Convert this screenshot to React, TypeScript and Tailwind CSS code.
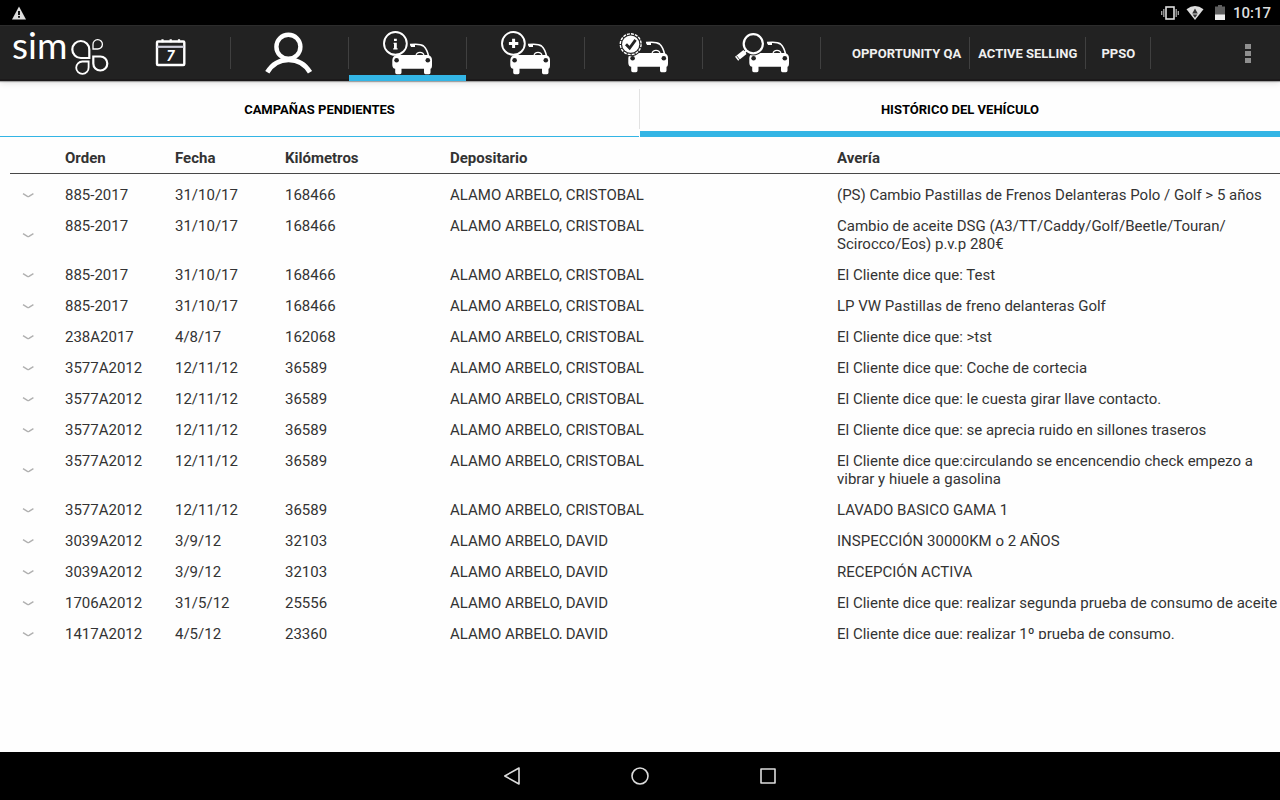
import { Fragment, useState } from "react";
import type { ReactNode } from "react";

type Row = [string, string, string, string, string];

const rows: Row[] = [
  ["885-2017", "31/10/17", "168466", "ALAMO ARBELO, CRISTOBAL", "(PS) Cambio Pastillas de Frenos Delanteras Polo / Golf > 5 años"],
  ["885-2017", "31/10/17", "168466", "ALAMO ARBELO, CRISTOBAL", "Cambio de aceite DSG (A3/TT/Caddy/Golf/Beetle/Touran/Scirocco/Eos) p.v.p 280€"],
  ["885-2017", "31/10/17", "168466", "ALAMO ARBELO, CRISTOBAL", "El Cliente dice que: Test"],
  ["885-2017", "31/10/17", "168466", "ALAMO ARBELO, CRISTOBAL", "LP VW Pastillas de freno delanteras Golf"],
  ["238A2017", "4/8/17", "162068", "ALAMO ARBELO, CRISTOBAL", "El Cliente dice que: >tst"],
  ["3577A2012", "12/11/12", "36589", "ALAMO ARBELO, CRISTOBAL", "El Cliente dice que: Coche de cortecia"],
  ["3577A2012", "12/11/12", "36589", "ALAMO ARBELO, CRISTOBAL", "El Cliente dice que: le cuesta girar llave contacto."],
  ["3577A2012", "12/11/12", "36589", "ALAMO ARBELO, CRISTOBAL", "El Cliente dice que: se aprecia ruido en sillones traseros"],
  ["3577A2012", "12/11/12", "36589", "ALAMO ARBELO, CRISTOBAL", "El Cliente dice que:circulando se encencendio check empezo a vibrar y hiuele a gasolina"],
  ["3577A2012", "12/11/12", "36589", "ALAMO ARBELO, CRISTOBAL", "LAVADO BASICO GAMA 1"],
  ["3039A2012", "3/9/12", "32103", "ALAMO ARBELO, DAVID", "INSPECCIÓN 30000KM o 2 AÑOS"],
  ["3039A2012", "3/9/12", "32103", "ALAMO ARBELO, DAVID", "RECEPCIÓN ACTIVA"],
  ["1706A2012", "31/5/12", "25556", "ALAMO ARBELO, DAVID", "El Cliente dice que: realizar segunda prueba de consumo de aceite"],
  ["1417A2012", "4/5/12", "23360", "ALAMO ARBELO, DAVID", "El Cliente dice que: realizar 1º prueba de consumo."],
];

function StatusBar() {
  return (
    <div className="flex h-[25px] shrink-0 items-center bg-black pr-[9px] pl-3 text-[#dedede]">
      <svg className="h-3.5 w-3.5" viewBox="0 0 14 14" aria-hidden="true">
        <path d="M7 0.5 14 13.5H0Z" fill="currentColor" />
        <path d="M6.1 5h1.8v4H6.1zM6.1 10h1.8v1.8H6.1z" fill="#000" />
      </svg>
      <div className="ml-auto flex items-center">
        <svg className="h-4 w-[18px]" viewBox="0 0 18 16" aria-hidden="true">
          <rect x="5" y="2" width="8" height="12" fill="none" stroke="currentColor" strokeWidth="1.6" />
          <path d="M2.8 4v8M15.2 4v8M0.7 6v4M17.3 6v4" stroke="#a8a8a8" strokeWidth="1.3" />
        </svg>
        <svg className="ml-[7px] h-4 w-[18px]" viewBox="0 0 18 16" aria-hidden="true">
          <path d="M0.5 4.3Q9-2.3 17.5 4.3L9 15Z" fill="currentColor" />
          <path d="M9 3.4 11.8 8.4H6.2ZM6.6 9.4h4.8L9 12.8Z" fill="#333" />
        </svg>
        <svg className="ml-[11px] h-4 w-2.5" viewBox="0 0 10 16" aria-hidden="true">
          <path d="M3 0h4v1.5h3V15H0V1.5h3z" fill="#5f5f5f" />
          <path d="M0 9.5h10V15H0z" fill="#f0f0f0" />
        </svg>
        <span className="ml-2 pt-0.5 text-[15px] leading-[23px] font-medium">10:17</span>
      </div>
    </div>
  );
}

function Logo() {
  return (
    <svg className="h-14 w-[113px] shrink-0 overflow-visible" viewBox="0 0 113 56" role="img" aria-label="sima">
      <text x="12" y="34" fill="#fff" fontFamily="Lato, sans-serif" fontSize="37">
        sim
      </text>
      <g fill="none" stroke="#fff" strokeWidth="2.2">
        <path d="M89.3 33H80.8A8.5 8.5 0 1 1 89.3 24.5Z" />
        <path d="M93 24V19.5A4.7 4.7 0 1 1 97.5 24Z" strokeWidth="1.3" />
        <path d="M93.3 31.5H100.3A7 7 0 1 1 93.3 38.5Z" />
        <path d="M88.6 36.5V42.5A6.2 6.2 0 1 1 82.4 36.5Z" strokeWidth="1.8" />
      </g>
    </svg>
  );
}

function Car({ x, y }: { x: number; y: number }) {
  return (
    <g transform={`translate(${x} ${y})`}>
      <path d="M18 1.6Q28 0.4 31.5 3Q35 6 36.5 13" fill="none" stroke="#fff" strokeWidth="1.6" />
      <path d="M18 1.5h5v2.4h-4z" fill="#fff" />
      <path d="M24 12.5Q24.5 9.4 28 9.4T32 12.5" fill="none" stroke="#fff" strokeWidth="1.2" />
      <path
        d="M5 12H36Q40 13 40 17V22Q40 25.5 38.5 25.7V29.5Q38.5 31.2 37 31.2H33.5Q32 31.2 32 29.5V25.7H9.5V29.5Q9.5 31.2 8 31.2H4.8Q3.2 31.2 3.2 29.5V25.7Q0.5 25.5 0.3 22V17Q0.8 12.6 5 12Z"
        fill="#fff"
      />
      <circle cx="4.6" cy="17.2" r="2.3" fill="#222" />
      <circle cx="35.8" cy="17.2" r="2.3" fill="#222" />
    </g>
  );
}

function CalendarIcon() {
  return (
    <>
      <rect x="44" y="16.5" width="27.3" height="23.5" rx="1" fill="none" stroke="#fff" strokeWidth="2.4" />
      <path d="M44 21.8H71" stroke="#d0d0dc" strokeWidth="2.2" />
      <path d="M49.5 14.2v3M57.7 14.2v3M66 14.2v3" stroke="#fff" strokeWidth="2.2" />
      <text x="57.6" y="36.3" fill="#fff" textAnchor="middle" fontFamily="Lato, sans-serif" fontWeight="900" fontStyle="italic" fontSize="15">
        7
      </text>
    </>
  );
}

function PersonIcon() {
  return (
    <g fill="none" stroke="#fff" strokeWidth="4.4">
      <circle cx="57.4" cy="21.8" r="12" />
      <path d="M36.3 47.3C41.5 38.5 49 34.8 57.6 34.8S73.8 38.5 79 47.3" strokeWidth="4.8" />
    </g>
  );
}

function InfoCarIcon() {
  return (
    <>
      <Car x={43} y={18} />
      <circle cx="46.4" cy="18.4" r="11.4" fill="#222" stroke="#fff" strokeWidth="1.9" />
      <path d="M45 13.8h2.8v2.3H45zM44.6 17.8h3.2v5.4h.8v1.2H44.2v-1.2h.8V19h-.4z" fill="#fff" />
    </>
  );
}

function AddCarIcon() {
  return (
    <>
      <Car x={43} y={18} />
      <circle cx="46.4" cy="18.4" r="11.4" fill="#222" stroke="#fff" strokeWidth="1.9" />
      <path d="M46.6 13.7v9.4M41.9 18.4h9.4" stroke="#fff" strokeWidth="3" />
    </>
  );
}

function CheckCarIcon() {
  return (
    <>
      <Car x={43} y={16} />
      <circle cx="45.7" cy="19.2" r="12" fill="#222" />
      <circle cx="45.7" cy="19.2" r="10.4" fill="none" stroke="#fff" strokeWidth="1.4" strokeDasharray="3 1.08" />
      <circle cx="45.7" cy="19.2" r="8.6" fill="#fff" />
      <path d="M41 19.3 44.6 23 50.6 14.8" fill="none" stroke="#222" strokeWidth="2.8" />
    </>
  );
}

function SearchCarIcon() {
  return (
    <>
      <Car x={46} y={16} />
      <circle cx="50.3" cy="18.8" r="11.6" fill="#222" />
      <circle cx="50.3" cy="18.8" r="9.6" fill="none" stroke="#fff" strokeWidth="2.2" />
      <path d="M43.4 25.6 41 28" stroke="#fff" strokeWidth="2" />
      <path d="M42 27 33.6 33.8" stroke="#fff" strokeWidth="5" />
      <path d="M33.6 30.7 37 35.2" stroke="#222" strokeWidth="0.8" />
    </>
  );
}

function Divider() {
  return <span className="h-8 w-px shrink-0 bg-[#404040]" />;
}

const tools: { label: string; icon: ReactNode }[] = [
  { label: "Calendario", icon: <CalendarIcon /> },
  { label: "Cliente", icon: <PersonIcon /> },
  { label: "Información del vehículo", icon: <InfoCarIcon /> },
  { label: "Añadir vehículo", icon: <AddCarIcon /> },
  { label: "Revisión del vehículo", icon: <CheckCarIcon /> },
  { label: "Buscar vehículo", icon: <SearchCarIcon /> },
];

function ActionBar() {
  const [active, setActive] = useState(2);
  return (
    <header className="relative z-20 flex h-14 shrink-0 items-center bg-[#222] shadow-[inset_0_1px_0_#2c2c2c,inset_0_-2px_0_#1c1a1b,0_1px_1px_rgba(0,0,0,0.3),0_2px_6px_rgba(0,0,0,0.12)]">
      <Logo />
      <nav className="flex items-center">
        {tools.map((tool, i) => (
          <div key={tool.label} className="flex items-center">
            <button
              type="button"
              aria-label={tool.label}
              aria-pressed={i === active}
              onClick={() => setActive(i)}
              className="relative h-14 w-[117px]"
            >
              <svg className="block h-14 w-full" viewBox="0 0 117 56" aria-hidden="true">
                {tool.icon}
              </svg>
              {i === active && <span className="absolute inset-x-0 bottom-0 h-1.5 bg-[#33b5e5]" />}
            </button>
            <Divider />
          </div>
        ))}
      </nav>
      <nav className="ml-[23px] flex items-center text-[13px] font-bold whitespace-nowrap text-[#f0f0f0]">
        {["OPPORTUNITY QA", "ACTIVE SELLING", "PPSO"].map((label) => (
          <div key={label} className="flex items-center">
            <button type="button" className="h-14 min-w-16 px-2 pt-0.5">
              {label}
            </button>
            <Divider />
          </div>
        ))}
      </nav>
      <button type="button" aria-label="Más opciones" className="ml-auto flex h-14 w-16 flex-col items-center justify-center gap-0.5">
        <span className="h-[5px] w-[6px] bg-[#8f8f8f]" />
        <span className="h-[5px] w-[6px] bg-[#8f8f8f]" />
        <span className="h-[5px] w-[6px] bg-[#8f8f8f]" />
      </button>
    </header>
  );
}

function Tabs() {
  return (
    <div role="tablist" className="grid h-14 shrink-0 grid-cols-2 text-[13px] font-bold text-black">
      <div className="flex items-center">
        <button type="button" role="tab" aria-selected="false" className="h-14 flex-1 border-b border-[#33b5e5] pt-0.5">
          CAMPAÑAS PENDIENTES
        </button>
        <span className="h-10 w-px bg-[#e2e2e2]" />
      </div>
      <button type="button" role="tab" aria-selected="true" className="h-14 border-b-[6px] border-[#33b5e5] pt-2">
        HISTÓRICO DEL VEHÍCULO
      </button>
    </div>
  );
}

/** Lets long lists of models wrap after each slash. */
function Breakable({ text }: { text: string }) {
  return text.split("/").map((part, i) => (
    <Fragment key={i}>
      {i > 0 && (
        <>
          /<wbr />
        </>
      )}
      {part}
    </Fragment>
  ));
}

function HistoryTable() {
  const head = "sticky top-0 h-[37px] border-b border-[#484848] bg-[#fefefe] p-0 pt-1.5 text-left font-bold";
  return (
    <div className="min-h-0 flex-1 overflow-y-auto pl-2.5 [scrollbar-width:none]">
      <table className="w-full table-fixed border-separate border-spacing-0 text-[15px] leading-[18px] text-[#333]">
        <colgroup>
          <col className="w-[55px]" />
          <col className="w-[110px]" />
          <col className="w-[110px]" />
          <col className="w-[165px]" />
          <col className="w-[387px]" />
          <col />
        </colgroup>
        <thead>
          <tr>
            <th className={head} aria-label="Desplegar" />
            <th className={head}>Orden</th>
            <th className={head}>Fecha</th>
            <th className={head}>Kilómetros</th>
            <th className={head}>Depositario</th>
            <th className={head}>Avería</th>
          </tr>
        </thead>
        <tbody>
          <tr aria-hidden="true">
            <td colSpan={6} className="h-1.5 p-0" />
          </tr>
          {rows.map((row, i) => (
            <tr key={i}>
              <td className="p-0 align-middle">
                <button type="button" aria-label="Desplegar" className="ml-3 block">
                  <svg className="block h-3 w-3" viewBox="0 0 12 12" fill="none" stroke="#b0b0b0" strokeWidth="1.4" aria-hidden="true">
                    <path d="M1 3.6 5.4 6.4Q6.2 6.8 7 6.4L11.4 3.6" />
                  </svg>
                </button>
              </td>
              {row.map((cell, j) => (
                <td key={j} className="p-0 pt-1.5 pb-[7px] align-top">
                  {j === 4 ? <Breakable text={cell} /> : cell}
                </td>
              ))}
            </tr>
          ))}
        </tbody>
      </table>
    </div>
  );
}

function NavBar() {
  return (
    <nav className="flex h-12 shrink-0 items-center justify-center bg-black text-[#dcdcdc]">
      <button type="button" aria-label="Atrás" className="flex h-12 w-32 items-center justify-center">
        <svg className="h-5 w-5" viewBox="0 0 20 20" fill="none" stroke="currentColor" strokeWidth="1.6" strokeLinejoin="round" aria-hidden="true">
          <path d="M17 2V18L2.8 10Z" />
        </svg>
      </button>
      <button type="button" aria-label="Inicio" className="flex h-12 w-32 items-center justify-center">
        <svg className="h-5 w-5" viewBox="0 0 20 20" fill="none" stroke="currentColor" strokeWidth="1.6" aria-hidden="true">
          <circle cx="10" cy="10" r="8" />
        </svg>
      </button>
      <button type="button" aria-label="Recientes" className="flex h-12 w-32 items-center justify-center">
        <svg className="h-5 w-5" viewBox="0 0 20 20" fill="none" stroke="currentColor" strokeWidth="1.6" strokeLinejoin="round" aria-hidden="true">
          <rect x="3" y="3" width="14" height="14" />
        </svg>
      </button>
    </nav>
  );
}

export default function App() {
  return (
    <div className="flex h-screen flex-col bg-[#fefefe] font-[Roboto,sans-serif]">
      <StatusBar />
      <ActionBar />
      <main className="flex min-h-0 flex-1 flex-col pb-[113px]">
        <Tabs />
        <HistoryTable />
      </main>
      <NavBar />
    </div>
  );
}
